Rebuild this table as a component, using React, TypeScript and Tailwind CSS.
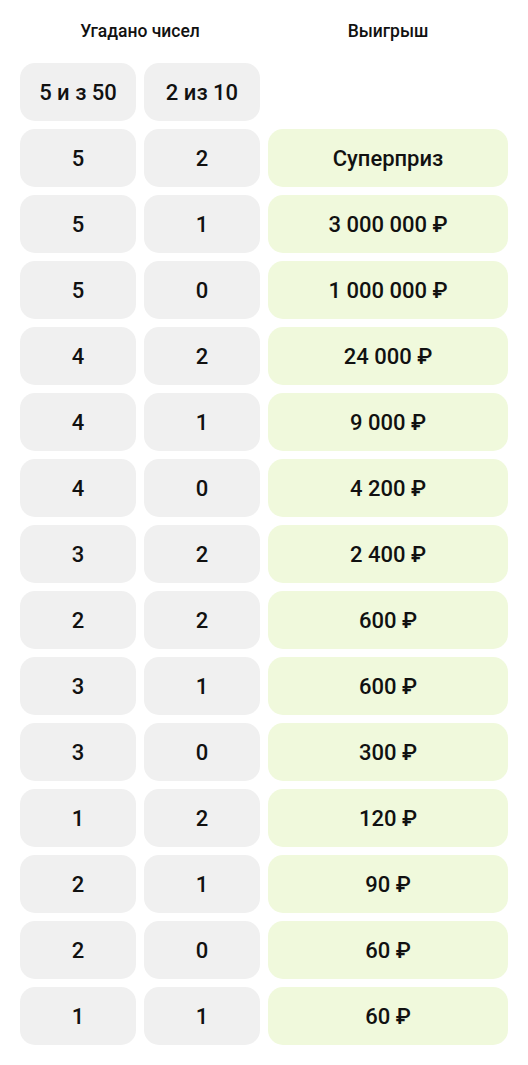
import React from "react";

const rows: [string, string, string][] = [
  ["5", "2", "Суперприз"],
  ["5", "1", "3 000 000 ₽"],
  ["5", "0", "1 000 000 ₽"],
  ["4", "2", "24 000 ₽"],
  ["4", "1", "9 000 ₽"],
  ["4", "0", "4 200 ₽"],
  ["3", "2", "2 400 ₽"],
  ["2", "2", "600 ₽"],
  ["3", "1", "600 ₽"],
  ["3", "0", "300 ₽"],
  ["1", "2", "120 ₽"],
  ["2", "1", "90 ₽"],
  ["2", "0", "60 ₽"],
  ["1", "1", "60 ₽"],
];

const gray =
  "h-[58px] w-[116px] rounded-[15px] bg-[#f0f0f0] flex items-center justify-center text-[22px] font-medium text-[#111]";
const green =
  "h-[58px] w-[240px] rounded-[15px] bg-[#f0f9dc] flex items-center justify-center text-[22px] font-medium text-[#111]";

export default function App() {
  return (
    <div
      className="w-[528px] bg-white px-5 pb-5"
      style={{ fontFamily: "Roboto, 'Noto Sans', sans-serif" }}
    >
      <div className="flex h-[63px] items-center gap-2 text-[17.5px] font-medium text-[#111]">
        <div className="w-[240px] text-center">Угадано чисел</div>
        <div className="w-[240px] text-center">Выигрыш</div>
      </div>
      <div className="flex flex-col gap-2">
        <div className="flex gap-2">
          <div className={gray}>5 и з 50</div>
          <div className={gray}>2 из 10</div>
        </div>
        {rows.map((r, i) => (
          <div key={i} className="flex gap-2">
            <div className={gray}>{r[0]}</div>
            <div className={gray}>{r[1]}</div>
            <div className={green}>{r[2]}</div>
          </div>
        ))}
      </div>
    </div>
  );
}
